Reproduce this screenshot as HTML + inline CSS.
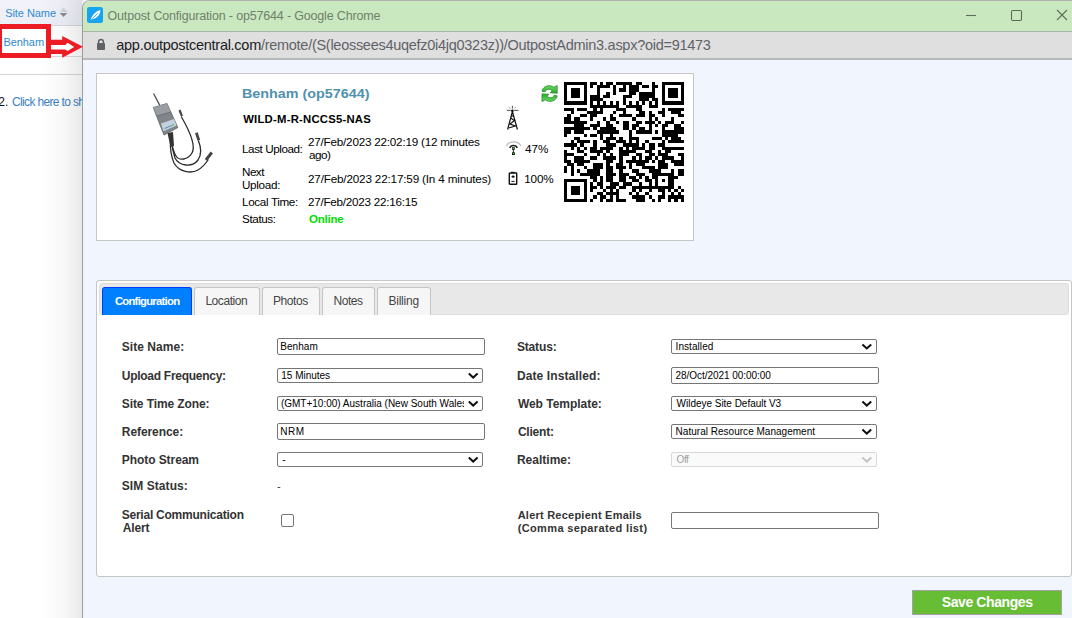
<!DOCTYPE html>
<html><head><meta charset="utf-8">
<style>
*{box-sizing:border-box}
html,body{margin:0;padding:0;width:1072px;height:618px;overflow:hidden;background:#fff;font-family:"Liberation Sans",sans-serif;position:relative}
.a{position:absolute;white-space:nowrap;line-height:1}
.abs{position:absolute}
.box{position:absolute;background:#fff;border:1px solid #767676;border-radius:2px}
.dis{border-color:#d8d8d8;background:#fafafa}
.chev{position:absolute}
</style></head><body>
<!-- LEFT PAGE -->
<div class="abs" style="left:0;top:0;width:90px;height:25px;background:linear-gradient(#f2f3fa,#eceef7)"></div>
<div class="abs" style="left:0;top:25px;width:90px;height:1px;background:#d5d8de"></div>
<div class="abs" style="left:0;top:56px;width:90px;height:1px;background:#dadada"></div>
<div class="abs" style="left:0;top:74px;width:90px;height:1px;background:#d4d4d4"></div>
<div class="a" style="left:5.20px;top:7.80px;font-size:11px;color:#2f8bd1;letter-spacing:-0.062px;">Site Name</div>
<svg class="abs" style="left:58px;top:6px" width="10" height="12"><polygon points="1.5,6 5.5,1.5 9.5,6" fill="#d6d6d6"/><polygon points="1.5,7 9.5,7 5.5,11" fill="#8e8e8e"/></svg>
<div class="a" style="left:3.50px;top:36.60px;font-size:11px;color:#2f8bd1;letter-spacing:-0.080px;">Benham</div>
<div class="a" style="left:-1.80px;top:95.90px;font-size:12px;color:#111;">2.</div>
<div class="a" style="left:12.00px;top:95.90px;font-size:12px;color:#3b7fc4;letter-spacing:-0.650px;">Click here to sh</div>
<div class="abs" style="left:40px;top:0;width:42px;height:618px;background:linear-gradient(to right,rgba(0,0,0,0),rgba(0,0,0,0.025) 50%,rgba(0,0,0,0.085))"></div>


<!-- CHROME WINDOW -->
<div class="abs" style="left:82px;top:0;width:992px;height:620px;border-left:1px solid #9c9c9c;border-top:1px solid #b0b0b0;border-top-left-radius:8px;overflow:hidden;background:#f1f5fe">
 <div class="abs" style="left:0;top:-1px;width:100%;height:32px;background:#c9e8bf;border-bottom:1px solid #a9b5a6"></div>
 <div class="abs" style="left:0;top:31px;width:100%;height:28px;background:#dfdfdf;border-bottom:2px solid #b8b8b8"></div>
</div>
<svg class="abs" style="left:87px;top:7px" width="17" height="17"><rect x="0" y="0" width="16" height="16" rx="2.5" fill="#17a3ef"/><path d="M3.6,13.6 C4.6,8.6 8,4.4 13.4,3 C13.2,7.8 10.4,11.2 5.6,12.2 Z" fill="#fff"/><path d="M3.2,14.2 L10.5,6.5" stroke="#17a3ef" stroke-width="0.9"/></svg>
<div class="a" style="left:107.50px;top:9.90px;font-size:12.5px;color:#72806e;letter-spacing:-0.170px;">Outpost Configuration - op57644 - Google Chrome</div>
<svg class="abs" style="left:960px;top:7px" width="112" height="16">
 <line x1="6" y1="8.5" x2="16" y2="8.5" stroke="#5e6b5a" stroke-width="1.1"/>
 <rect x="51.5" y="3.5" width="10" height="10" rx="1.2" fill="none" stroke="#5e6b5a" stroke-width="1.1"/>
 <path d="M97,3 L107,13 M107,3 L97,13" stroke="#5e6b5a" stroke-width="1.1"/>
</svg>
<svg class="abs" style="left:96px;top:38px" width="10" height="13"><path d="M2.6,5.5 V4 A2.4,2.4 0 0 1 7.4,4 V5.5" fill="none" stroke="#5f6368" stroke-width="1.5"/><rect x="1" y="5" width="8" height="7" rx="0.8" fill="#5f6368"/></svg>
<div class="a" style="left:116.30px;top:37.90px;font-size:14.5px;color:#5f6368;letter-spacing:-0.277px;"><span style="color:#202124">app.outpostcentral.com</span>/remote/(S(leossees4uqefz0i4jq0323z))/OutpostAdmin3.aspx?oid=91473</div>

<div class="abs" style="left:-3px;top:24px;width:54px;height:34px;border:5px solid #ec1c24"></div>
<svg class="abs" style="left:0;top:0" width="90" height="62">
<polygon points="50,39.8 62.2,39.8 62.2,36 83,46.8 62.2,57.7 62.2,54.1 50,54.1" fill="#ec1c24"/>
<polygon points="51,45 65.2,45 67.6,42.8 74.2,46.9 67.6,51 65.2,49.4 51,49.4" fill="#fff"/>
</svg>
<!-- CARD -->
<div class="abs" style="left:96px;top:73px;width:598px;height:168px;background:#fff;border:1px solid #c6c6c6"></div>
<svg class="abs" style="left:140px;top:88px" width="80" height="90" viewBox="140 88 80 90">
 <line x1="153.8" y1="94" x2="159.6" y2="105" stroke="#5a5050" stroke-width="1.4" stroke-linecap="round"/>
 <g fill="none" stroke="#2a2a2a" stroke-width="1.3" stroke-linecap="round">
  <path d="M171,140 C172,146 173,151 176,156 C179,161 188,160 192,153 C196,146 189,130 181.5,117"/>
  <path d="M171.5,140 C172,146 173,152 175,158 C179,166 192,168 198,160 C202,154 201,147 198.5,141"/>
  <path d="M170.5,140 C170,148 171,156 174,163 C179,172 191,174 198,170 C203,167 206,163 208,160"/>
 </g>
 <path d="M167.5,133 L173,132 L174,146 L170.5,147 Z" fill="#333"/>
 <polygon points="153.3,107.5 167,103.5 177.8,127.5 164,135" fill="#818589" stroke="#63676c" stroke-width="0.9" stroke-linejoin="round"/>
 <polygon points="153.3,107.5 167,103.5 170.5,111.5 157,115.5" fill="#9a9ea3"/>
 <path d="M157,116 L171,112" stroke="#6a6e73" stroke-width="0.8"/>
 <polygon points="161,123.5 174,119 176.6,125.6 163.4,131.2" fill="#c3d1de"/>
 <path d="M164.5,128.5 L170.5,126" stroke="#4a7fc0" stroke-width="0.9"/>
 <path d="M170.5,126 L174,124.5" stroke="#4aaa4a" stroke-width="0.9"/>
 <rect x="179.6" y="109.8" width="2.2" height="6.5" fill="#444" transform="rotate(-22 180.7 113)"/>
 <rect x="196.2" y="132.6" width="2.8" height="8" fill="#444" transform="rotate(-18 197.6 136.6)"/>
 <rect x="207.4" y="151.5" width="3" height="9.5" fill="#444" transform="rotate(38 208.9 156.2)"/>
</svg>

<div class="a" style="left:242.07px;top:87.70px;font-size:12.7px;color:#4f91ae;font-weight:bold;transform:scaleX(1.1297);transform-origin:0 0;">Benham (op57644)</div>
<div class="a" style="left:243.20px;top:113.80px;font-size:11.3px;color:#000;font-weight:bold;letter-spacing:0.235px;">WILD-M-R-NCCS5-NAS</div>
<div class="a" style="left:242.00px;top:143.40px;font-size:11.7px;color:#000;letter-spacing:-0.436px;">Last Upload:</div><div class="a" style="left:242.00px;top:166.00px;font-size:11.7px;color:#000;letter-spacing:-0.533px;">Next</div><div class="a" style="left:242.00px;top:178.70px;font-size:11.7px;color:#000;letter-spacing:-0.317px;">Upload:</div><div class="a" style="left:242.00px;top:195.80px;font-size:11.7px;color:#000;letter-spacing:-0.350px;">Local Time:</div><div class="a" style="left:242.00px;top:212.90px;font-size:11.7px;color:#000;letter-spacing:-0.383px;">Status:</div>
<div class="a" style="left:308.00px;top:136.00px;font-size:11.7px;color:#000;letter-spacing:-0.219px;">27/Feb/2023 22:02:19 (12 minutes</div><div class="a" style="left:309.00px;top:148.70px;font-size:11.7px;color:#000;letter-spacing:-0.500px;">ago)</div><div class="a" style="left:308.00px;top:172.70px;font-size:11.7px;color:#000;letter-spacing:-0.171px;">27/Feb/2023 22:17:59 (In 4 minutes)</div><div class="a" style="left:308.00px;top:196.00px;font-size:11.7px;color:#000;letter-spacing:-0.253px;">27/Feb/2023 22:16:15</div><div class="a" style="left:309.00px;top:214.00px;font-size:11.5px;color:#00dd00;font-weight:bold;letter-spacing:-0.240px;">Online</div>
<svg class="abs" style="left:540.6px;top:84.6px" width="17" height="17" viewBox="0 0 17 17">
 <defs><linearGradient id="rg" x1="0" y1="0" x2="0" y2="1"><stop offset="0" stop-color="#6fd86a"/><stop offset="1" stop-color="#2aa82a"/></linearGradient></defs>
 <g fill="url(#rg)" stroke="#178a17" stroke-width="0.75" stroke-linejoin="round">
 <path d="M1,6.2 C1.8,2.2 5.6,0.3 9.4,0.8 C10.9,1 12.1,1.6 12.9,2.3 L16.2,0.5 L16.2,8.2 L9.2,7.8 L11.2,5.8 C10.3,4.8 8.6,4.1 7,4.3 C5.4,4.6 4.5,5.5 4.1,6.8 Z"/>
 <path d="M1,6.2 C1.8,2.2 5.6,0.3 9.4,0.8 C10.9,1 12.1,1.6 12.9,2.3 L16.2,0.5 L16.2,8.2 L9.2,7.8 L11.2,5.8 C10.3,4.8 8.6,4.1 7,4.3 C5.4,4.6 4.5,5.5 4.1,6.8 Z" transform="rotate(180 8.6 8.55)"/>
 </g>
</svg>
<svg class="abs" style="left:506px;top:105px" width="14" height="26" viewBox="0 0 14 26">
 <g stroke="#222" stroke-width="0.8" fill="none">
  <line x1="0.8" y1="5.4" x2="4.6" y2="5.4"/><line x1="8.2" y1="5.4" x2="12.6" y2="5.4"/>
  <line x1="6.4" y1="0.8" x2="6.4" y2="3.6"/>
  <line x1="2.6" y1="2" x2="4.4" y2="3.6" stroke="#888"/><line x1="10.2" y1="2" x2="8.4" y2="3.6" stroke="#888"/>
 </g>
 <circle cx="6.4" cy="5.8" r="1.3" fill="#000"/>
 <g stroke="#111" stroke-width="1.2" fill="none">
  <path d="M6.4,6.5 L1.6,24.5 M6.4,6.5 L11.4,24.5"/>
  <path d="M4.6,13 L8.4,15.5 L4,19 L9.4,21 L2.6,23"/>
  <path d="M5,11 L8,11"/>
 </g>
</svg>
<svg class="abs" style="left:505px;top:140px" width="17" height="16" viewBox="0 0 17 16">
 <path d="M1.4,6 A7.6,6 0 0 1 15.8,6" fill="none" stroke="#b8b8b8" stroke-width="1.2"/>
 <path d="M4.8,8 A3.8,3.2 0 0 1 12.2,8" fill="none" stroke="#222" stroke-width="1.5"/>
 <rect x="7.1" y="7.2" width="2.6" height="2.6" fill="#111"/>
 <rect x="7" y="12.4" width="2.9" height="2.6" fill="#111"/>
 <line x1="8.4" y1="9" x2="8.4" y2="13" stroke="#111" stroke-width="0.9"/>
 <circle cx="8.4" cy="8.5" r="0.6" fill="#3f3"/><circle cx="8.45" cy="13.7" r="0.6" fill="#3f3"/>
</svg>
<svg class="abs" style="left:508px;top:171px" width="10" height="14" viewBox="0 0 10 14">
 <rect x="3" y="0.8" width="3.6" height="1.6" fill="#111"/>
 <rect x="1.3" y="2" width="7.4" height="11.3" rx="0.6" fill="#fff" stroke="#111" stroke-width="1.4"/>
 <path d="M3.6,5.6 H6.6 M5.1,4.2 V7" stroke="#111" stroke-width="1.1"/>
 <path d="M3.4,10.4 H6.6" stroke="#111" stroke-width="1"/>
</svg>

<div class="a" style="left:525.00px;top:143.30px;font-size:11.7px;color:#000;">47%</div><div class="a" style="left:524.30px;top:172.90px;font-size:11.7px;color:#000;letter-spacing:-0.200px;">100%</div>
<svg class="abs" style="left:564px;top:81px" width="122" height="122" viewBox="564 81 122 122" shape-rendering="crispEdges"><path fill="#000" d="M564.20,81.80h22.70v3.24h-22.70zM590.15,81.80h6.49v3.24h-6.49zM599.88,81.80h3.24v3.24h-3.24zM606.36,81.80h6.49v3.24h-6.49zM616.09,81.80h16.22v3.24h-16.22zM635.55,81.80h6.49v3.24h-6.49zM651.77,81.80h3.24v3.24h-3.24zM661.50,81.80h22.70v3.24h-22.70zM564.20,85.04h3.24v3.24h-3.24zM583.66,85.04h3.24v3.24h-3.24zM590.15,85.04h3.24v3.24h-3.24zM596.63,85.04h12.97v3.24h-12.97zM612.85,85.04h3.24v3.24h-3.24zM622.58,85.04h3.24v3.24h-3.24zM629.06,85.04h9.73v3.24h-9.73zM642.04,85.04h6.49v3.24h-6.49zM651.77,85.04h6.49v3.24h-6.49zM661.50,85.04h3.24v3.24h-3.24zM680.96,85.04h3.24v3.24h-3.24zM564.20,88.29h3.24v3.24h-3.24zM570.69,88.29h9.73v3.24h-9.73zM583.66,88.29h3.24v3.24h-3.24zM596.63,88.29h3.24v3.24h-3.24zM612.85,88.29h3.24v3.24h-3.24zM619.34,88.29h6.49v3.24h-6.49zM629.06,88.29h9.73v3.24h-9.73zM651.77,88.29h3.24v3.24h-3.24zM661.50,88.29h3.24v3.24h-3.24zM667.98,88.29h9.73v3.24h-9.73zM680.96,88.29h3.24v3.24h-3.24zM564.20,91.53h3.24v3.24h-3.24zM570.69,91.53h9.73v3.24h-9.73zM583.66,91.53h3.24v3.24h-3.24zM596.63,91.53h3.24v3.24h-3.24zM606.36,91.53h3.24v3.24h-3.24zM612.85,91.53h3.24v3.24h-3.24zM629.06,91.53h6.49v3.24h-6.49zM638.79,91.53h16.22v3.24h-16.22zM661.50,91.53h3.24v3.24h-3.24zM667.98,91.53h9.73v3.24h-9.73zM680.96,91.53h3.24v3.24h-3.24zM564.20,94.77h3.24v3.24h-3.24zM570.69,94.77h9.73v3.24h-9.73zM583.66,94.77h3.24v3.24h-3.24zM590.15,94.77h9.73v3.24h-9.73zM603.12,94.77h6.49v3.24h-6.49zM622.58,94.77h9.73v3.24h-9.73zM638.79,94.77h16.22v3.24h-16.22zM661.50,94.77h3.24v3.24h-3.24zM667.98,94.77h9.73v3.24h-9.73zM680.96,94.77h3.24v3.24h-3.24zM564.20,98.02h3.24v3.24h-3.24zM583.66,98.02h3.24v3.24h-3.24zM590.15,98.02h12.97v3.24h-12.97zM622.58,98.02h3.24v3.24h-3.24zM638.79,98.02h9.73v3.24h-9.73zM651.77,98.02h6.49v3.24h-6.49zM661.50,98.02h3.24v3.24h-3.24zM680.96,98.02h3.24v3.24h-3.24zM564.20,101.26h22.70v3.24h-22.70zM590.15,101.26h3.24v3.24h-3.24zM596.63,101.26h3.24v3.24h-3.24zM603.12,101.26h3.24v3.24h-3.24zM609.61,101.26h3.24v3.24h-3.24zM616.09,101.26h3.24v3.24h-3.24zM622.58,101.26h3.24v3.24h-3.24zM629.06,101.26h3.24v3.24h-3.24zM635.55,101.26h3.24v3.24h-3.24zM642.04,101.26h3.24v3.24h-3.24zM648.52,101.26h3.24v3.24h-3.24zM655.01,101.26h3.24v3.24h-3.24zM661.50,101.26h22.70v3.24h-22.70zM590.15,104.50h29.19v3.24h-29.19zM625.82,104.50h16.22v3.24h-16.22zM648.52,104.50h9.73v3.24h-9.73zM564.20,107.75h9.73v3.24h-9.73zM577.17,107.75h9.73v3.24h-9.73zM593.39,107.75h3.24v3.24h-3.24zM599.88,107.75h3.24v3.24h-3.24zM616.09,107.75h9.73v3.24h-9.73zM635.55,107.75h6.49v3.24h-6.49zM661.50,107.75h3.24v3.24h-3.24zM667.98,107.75h16.22v3.24h-16.22zM570.69,110.99h3.24v3.24h-3.24zM586.90,110.99h16.22v3.24h-16.22zM612.85,110.99h3.24v3.24h-3.24zM622.58,110.99h3.24v3.24h-3.24zM638.79,110.99h6.49v3.24h-6.49zM648.52,110.99h3.24v3.24h-3.24zM658.25,110.99h6.49v3.24h-6.49zM671.23,110.99h9.73v3.24h-9.73zM567.44,114.23h3.24v3.24h-3.24zM580.42,114.23h6.49v3.24h-6.49zM590.15,114.23h6.49v3.24h-6.49zM609.61,114.23h3.24v3.24h-3.24zM619.34,114.23h12.97v3.24h-12.97zM635.55,114.23h9.73v3.24h-9.73zM648.52,114.23h6.49v3.24h-6.49zM661.50,114.23h3.24v3.24h-3.24zM677.71,114.23h6.49v3.24h-6.49zM564.20,117.48h6.49v3.24h-6.49zM573.93,117.48h6.49v3.24h-6.49zM590.15,117.48h3.24v3.24h-3.24zM603.12,117.48h3.24v3.24h-3.24zM609.61,117.48h6.49v3.24h-6.49zM632.31,117.48h3.24v3.24h-3.24zM648.52,117.48h3.24v3.24h-3.24zM655.01,117.48h3.24v3.24h-3.24zM671.23,117.48h3.24v3.24h-3.24zM564.20,120.72h22.70v3.24h-22.70zM596.63,120.72h3.24v3.24h-3.24zM606.36,120.72h3.24v3.24h-3.24zM616.09,120.72h3.24v3.24h-3.24zM622.58,120.72h6.49v3.24h-6.49zM635.55,120.72h6.49v3.24h-6.49zM645.28,120.72h9.73v3.24h-9.73zM658.25,120.72h3.24v3.24h-3.24zM664.74,120.72h9.73v3.24h-9.73zM680.96,120.72h3.24v3.24h-3.24zM573.93,123.96h9.73v3.24h-9.73zM590.15,123.96h9.73v3.24h-9.73zM606.36,123.96h6.49v3.24h-6.49zM622.58,123.96h6.49v3.24h-6.49zM632.31,123.96h6.49v3.24h-6.49zM648.52,123.96h3.24v3.24h-3.24zM655.01,123.96h3.24v3.24h-3.24zM661.50,123.96h6.49v3.24h-6.49zM674.47,123.96h6.49v3.24h-6.49zM564.20,127.21h25.95v3.24h-25.95zM593.39,127.21h3.24v3.24h-3.24zM599.88,127.21h16.22v3.24h-16.22zM622.58,127.21h6.49v3.24h-6.49zM632.31,127.21h3.24v3.24h-3.24zM638.79,127.21h6.49v3.24h-6.49zM648.52,127.21h3.24v3.24h-3.24zM661.50,127.21h3.24v3.24h-3.24zM674.47,127.21h9.73v3.24h-9.73zM564.20,130.45h6.49v3.24h-6.49zM573.93,130.45h9.73v3.24h-9.73zM596.63,130.45h22.70v3.24h-22.70zM629.06,130.45h3.24v3.24h-3.24zM635.55,130.45h16.22v3.24h-16.22zM655.01,130.45h3.24v3.24h-3.24zM661.50,130.45h22.70v3.24h-22.70zM564.20,133.69h3.24v3.24h-3.24zM583.66,133.69h3.24v3.24h-3.24zM590.15,133.69h6.49v3.24h-6.49zM599.88,133.69h3.24v3.24h-3.24zM609.61,133.69h3.24v3.24h-3.24zM629.06,133.69h3.24v3.24h-3.24zM661.50,133.69h16.22v3.24h-16.22zM573.93,136.94h6.49v3.24h-6.49zM599.88,136.94h3.24v3.24h-3.24zM606.36,136.94h9.73v3.24h-9.73zM619.34,136.94h3.24v3.24h-3.24zM629.06,136.94h9.73v3.24h-9.73zM651.77,136.94h9.73v3.24h-9.73zM664.74,136.94h3.24v3.24h-3.24zM671.23,136.94h9.73v3.24h-9.73zM570.69,140.18h3.24v3.24h-3.24zM577.17,140.18h12.97v3.24h-12.97zM593.39,140.18h3.24v3.24h-3.24zM603.12,140.18h6.49v3.24h-6.49zM616.09,140.18h9.73v3.24h-9.73zM629.06,140.18h3.24v3.24h-3.24zM635.55,140.18h3.24v3.24h-3.24zM645.28,140.18h3.24v3.24h-3.24zM661.50,140.18h3.24v3.24h-3.24zM667.98,140.18h16.22v3.24h-16.22zM564.20,143.42h12.97v3.24h-12.97zM580.42,143.42h3.24v3.24h-3.24zM593.39,143.42h3.24v3.24h-3.24zM606.36,143.42h9.73v3.24h-9.73zM622.58,143.42h16.22v3.24h-16.22zM642.04,143.42h3.24v3.24h-3.24zM648.52,143.42h6.49v3.24h-6.49zM658.25,143.42h6.49v3.24h-6.49zM570.69,146.66h3.24v3.24h-3.24zM577.17,146.66h3.24v3.24h-3.24zM583.66,146.66h3.24v3.24h-3.24zM590.15,146.66h6.49v3.24h-6.49zM599.88,146.66h12.97v3.24h-12.97zM619.34,146.66h3.24v3.24h-3.24zM625.82,146.66h3.24v3.24h-3.24zM632.31,146.66h12.97v3.24h-12.97zM648.52,146.66h6.49v3.24h-6.49zM661.50,146.66h22.70v3.24h-22.70zM564.20,149.91h3.24v3.24h-3.24zM577.17,149.91h6.49v3.24h-6.49zM590.15,149.91h12.97v3.24h-12.97zM606.36,149.91h3.24v3.24h-3.24zM619.34,149.91h16.22v3.24h-16.22zM645.28,149.91h6.49v3.24h-6.49zM658.25,149.91h3.24v3.24h-3.24zM664.74,149.91h6.49v3.24h-6.49zM564.20,153.15h9.73v3.24h-9.73zM583.66,153.15h3.24v3.24h-3.24zM596.63,153.15h3.24v3.24h-3.24zM603.12,153.15h3.24v3.24h-3.24zM609.61,153.15h3.24v3.24h-3.24zM619.34,153.15h9.73v3.24h-9.73zM635.55,153.15h6.49v3.24h-6.49zM648.52,153.15h6.49v3.24h-6.49zM658.25,153.15h9.73v3.24h-9.73zM677.71,153.15h6.49v3.24h-6.49zM564.20,156.39h3.24v3.24h-3.24zM573.93,156.39h9.73v3.24h-9.73zM590.15,156.39h6.49v3.24h-6.49zM603.12,156.39h12.97v3.24h-12.97zM619.34,156.39h3.24v3.24h-3.24zM632.31,156.39h3.24v3.24h-3.24zM638.79,156.39h3.24v3.24h-3.24zM645.28,156.39h6.49v3.24h-6.49zM655.01,156.39h3.24v3.24h-3.24zM661.50,156.39h12.97v3.24h-12.97zM680.96,156.39h3.24v3.24h-3.24zM564.20,159.64h6.49v3.24h-6.49zM573.93,159.64h16.22v3.24h-16.22zM606.36,159.64h6.49v3.24h-6.49zM619.34,159.64h3.24v3.24h-3.24zM625.82,159.64h22.70v3.24h-22.70zM651.77,159.64h3.24v3.24h-3.24zM658.25,159.64h6.49v3.24h-6.49zM671.23,159.64h12.97v3.24h-12.97zM567.44,162.88h6.49v3.24h-6.49zM577.17,162.88h6.49v3.24h-6.49zM593.39,162.88h9.73v3.24h-9.73zM606.36,162.88h3.24v3.24h-3.24zM616.09,162.88h6.49v3.24h-6.49zM629.06,162.88h3.24v3.24h-3.24zM635.55,162.88h9.73v3.24h-9.73zM658.25,162.88h9.73v3.24h-9.73zM674.47,162.88h9.73v3.24h-9.73zM564.20,166.12h3.24v3.24h-3.24zM570.69,166.12h3.24v3.24h-3.24zM583.66,166.12h3.24v3.24h-3.24zM593.39,166.12h9.73v3.24h-9.73zM606.36,166.12h6.49v3.24h-6.49zM616.09,166.12h9.73v3.24h-9.73zM629.06,166.12h3.24v3.24h-3.24zM642.04,166.12h12.97v3.24h-12.97zM658.25,166.12h9.73v3.24h-9.73zM564.20,169.37h3.24v3.24h-3.24zM570.69,169.37h3.24v3.24h-3.24zM577.17,169.37h3.24v3.24h-3.24zM586.90,169.37h12.97v3.24h-12.97zM606.36,169.37h6.49v3.24h-6.49zM619.34,169.37h3.24v3.24h-3.24zM632.31,169.37h6.49v3.24h-6.49zM648.52,169.37h12.97v3.24h-12.97zM671.23,169.37h3.24v3.24h-3.24zM677.71,169.37h6.49v3.24h-6.49zM570.69,172.61h3.24v3.24h-3.24zM580.42,172.61h19.46v3.24h-19.46zM606.36,172.61h9.73v3.24h-9.73zM619.34,172.61h9.73v3.24h-9.73zM635.55,172.61h9.73v3.24h-9.73zM651.77,172.61h22.70v3.24h-22.70zM677.71,172.61h6.49v3.24h-6.49zM590.15,175.85h6.49v3.24h-6.49zM599.88,175.85h3.24v3.24h-3.24zM606.36,175.85h6.49v3.24h-6.49zM619.34,175.85h6.49v3.24h-6.49zM629.06,175.85h6.49v3.24h-6.49zM638.79,175.85h3.24v3.24h-3.24zM645.28,175.85h3.24v3.24h-3.24zM651.77,175.85h6.49v3.24h-6.49zM667.98,175.85h9.73v3.24h-9.73zM564.20,179.10h22.70v3.24h-22.70zM593.39,179.10h3.24v3.24h-3.24zM599.88,179.10h3.24v3.24h-3.24zM606.36,179.10h6.49v3.24h-6.49zM619.34,179.10h6.49v3.24h-6.49zM632.31,179.10h6.49v3.24h-6.49zM645.28,179.10h6.49v3.24h-6.49zM655.01,179.10h3.24v3.24h-3.24zM661.50,179.10h3.24v3.24h-3.24zM667.98,179.10h6.49v3.24h-6.49zM564.20,182.34h3.24v3.24h-3.24zM583.66,182.34h3.24v3.24h-3.24zM590.15,182.34h3.24v3.24h-3.24zM596.63,182.34h6.49v3.24h-6.49zM609.61,182.34h9.73v3.24h-9.73zM622.58,182.34h9.73v3.24h-9.73zM638.79,182.34h3.24v3.24h-3.24zM648.52,182.34h3.24v3.24h-3.24zM655.01,182.34h3.24v3.24h-3.24zM667.98,182.34h6.49v3.24h-6.49zM564.20,185.58h3.24v3.24h-3.24zM570.69,185.58h9.73v3.24h-9.73zM583.66,185.58h3.24v3.24h-3.24zM590.15,185.58h6.49v3.24h-6.49zM599.88,185.58h3.24v3.24h-3.24zM606.36,185.58h9.73v3.24h-9.73zM619.34,185.58h6.49v3.24h-6.49zM632.31,185.58h42.16v3.24h-42.16zM677.71,185.58h3.24v3.24h-3.24zM564.20,188.83h3.24v3.24h-3.24zM570.69,188.83h9.73v3.24h-9.73zM583.66,188.83h3.24v3.24h-3.24zM590.15,188.83h3.24v3.24h-3.24zM603.12,188.83h3.24v3.24h-3.24zM609.61,188.83h3.24v3.24h-3.24zM616.09,188.83h3.24v3.24h-3.24zM632.31,188.83h3.24v3.24h-3.24zM638.79,188.83h3.24v3.24h-3.24zM648.52,188.83h3.24v3.24h-3.24zM658.25,188.83h6.49v3.24h-6.49zM667.98,188.83h3.24v3.24h-3.24zM674.47,188.83h3.24v3.24h-3.24zM680.96,188.83h3.24v3.24h-3.24zM564.20,192.07h3.24v3.24h-3.24zM570.69,192.07h9.73v3.24h-9.73zM583.66,192.07h3.24v3.24h-3.24zM596.63,192.07h6.49v3.24h-6.49zM606.36,192.07h12.97v3.24h-12.97zM629.06,192.07h3.24v3.24h-3.24zM635.55,192.07h3.24v3.24h-3.24zM645.28,192.07h3.24v3.24h-3.24zM661.50,192.07h3.24v3.24h-3.24zM671.23,192.07h3.24v3.24h-3.24zM677.71,192.07h3.24v3.24h-3.24zM564.20,195.31h3.24v3.24h-3.24zM583.66,195.31h3.24v3.24h-3.24zM593.39,195.31h3.24v3.24h-3.24zM599.88,195.31h6.49v3.24h-6.49zM609.61,195.31h3.24v3.24h-3.24zM616.09,195.31h3.24v3.24h-3.24zM632.31,195.31h12.97v3.24h-12.97zM648.52,195.31h3.24v3.24h-3.24zM658.25,195.31h6.49v3.24h-6.49zM667.98,195.31h16.22v3.24h-16.22zM564.20,198.56h22.70v3.24h-22.70zM590.15,198.56h3.24v3.24h-3.24zM599.88,198.56h3.24v3.24h-3.24zM606.36,198.56h6.49v3.24h-6.49zM616.09,198.56h9.73v3.24h-9.73zM635.55,198.56h9.73v3.24h-9.73zM651.77,198.56h3.24v3.24h-3.24zM658.25,198.56h3.24v3.24h-3.24zM667.98,198.56h3.24v3.24h-3.24zM674.47,198.56h3.24v3.24h-3.24zM680.96,198.56h3.24v3.24h-3.24z"/></svg>

<!-- WIDGET -->
<div class="abs" style="left:96px;top:280px;width:976px;height:297px;background:#fff;border:1px solid #c5c5c5;border-radius:3px"></div>
<div class="abs" style="left:99px;top:283px;width:970px;height:32px;background:#e8e8e8;border:1px solid #dddddd;border-radius:3px"></div>
<div class="abs" style="left:102px;top:287px;width:90px;height:28px;background:#007fff;border:1px solid #003eff;border-bottom:none;border-radius:3px 3px 0 0"></div>
<div class="abs" style="left:194px;top:287px;width:66px;height:28px;background:#f6f6f6;border:1px solid #c5c5c5;border-bottom:none;border-radius:3px 3px 0 0"></div>
<div class="abs" style="left:262px;top:287px;width:58px;height:28px;background:#f6f6f6;border:1px solid #c5c5c5;border-bottom:none;border-radius:3px 3px 0 0"></div>
<div class="abs" style="left:322px;top:287px;width:53px;height:28px;background:#f6f6f6;border:1px solid #c5c5c5;border-bottom:none;border-radius:3px 3px 0 0"></div>
<div class="abs" style="left:377px;top:287px;width:54px;height:28px;background:#f6f6f6;border:1px solid #c5c5c5;border-bottom:none;border-radius:3px 3px 0 0"></div>
<div class="a" style="left:114.90px;top:295.90px;font-size:11.3px;color:#fff;font-weight:bold;letter-spacing:-0.742px;">Configuration</div><div class="a" style="left:205.40px;top:295.00px;font-size:12px;color:#454545;letter-spacing:-0.443px;">Location</div><div class="a" style="left:273.00px;top:295.00px;font-size:12px;color:#454545;letter-spacing:-0.440px;">Photos</div><div class="a" style="left:333.60px;top:295.00px;font-size:12px;color:#454545;letter-spacing:-0.500px;">Notes</div><div class="a" style="left:388.40px;top:295.00px;font-size:12px;color:#454545;letter-spacing:-0.217px;">Billing</div>
<div class="a" style="left:121.80px;top:341.40px;font-size:12px;color:#333;font-weight:bold;letter-spacing:0.044px;">Site Name:</div><div class="a" style="left:121.80px;top:370.00px;font-size:12px;color:#333;font-weight:bold;letter-spacing:-0.275px;">Upload Frequency:</div><div class="a" style="left:121.80px;top:398.30px;font-size:12px;color:#333;font-weight:bold;letter-spacing:-0.100px;">Site Time Zone:</div><div class="a" style="left:121.80px;top:426.30px;font-size:12px;color:#333;font-weight:bold;letter-spacing:-0.078px;">Reference:</div><div class="a" style="left:121.80px;top:454.40px;font-size:12px;color:#333;font-weight:bold;letter-spacing:-0.073px;">Photo Stream</div><div class="a" style="left:121.70px;top:479.80px;font-size:12px;color:#333;font-weight:bold;letter-spacing:0.080px;">SIM Status:</div><div class="a" style="left:121.70px;top:509.10px;font-size:12px;color:#333;font-weight:bold;letter-spacing:-0.232px;">Serial Communication</div><div class="a" style="left:122.70px;top:521.50px;font-size:12px;color:#333;font-weight:bold;letter-spacing:-0.150px;">Alert</div>
<div class="a" style="left:516.90px;top:341.40px;font-size:12px;color:#333;font-weight:bold;letter-spacing:-0.150px;">Status:</div><div class="a" style="left:516.90px;top:370.20px;font-size:12px;color:#333;font-weight:bold;letter-spacing:0.107px;">Date Installed:</div><div class="a" style="left:517.90px;top:398.30px;font-size:12px;color:#333;font-weight:bold;letter-spacing:-0.025px;">Web Template:</div><div class="a" style="left:517.90px;top:426.30px;font-size:12px;color:#333;font-weight:bold;letter-spacing:-0.217px;">Client:</div><div class="a" style="left:516.90px;top:454.40px;font-size:12px;color:#333;font-weight:bold;letter-spacing:0.013px;">Realtime:</div><div class="a" style="left:517.70px;top:509.70px;font-size:11px;color:#333;font-weight:bold;letter-spacing:0.229px;">Alert Recepient Emails</div><div class="a" style="left:517.70px;top:522.60px;font-size:11px;color:#333;font-weight:bold;letter-spacing:0.367px;">(Comma separated list)</div>
<!-- inputs -->
<div class="box" style="left:277px;top:338px;width:208px;height:17px"></div>
<div class="box" style="left:277px;top:368px;width:206px;height:15px"></div>
<div class="box" style="left:277px;top:396px;width:206px;height:15px;overflow:hidden"></div>
<div class="box" style="left:277px;top:423px;width:208px;height:17px"></div>
<div class="box" style="left:277px;top:452px;width:206px;height:15px"></div>
<div class="abs" style="left:281px;top:396px;width:183px;height:14px;overflow:hidden"><div class="a" style="left:-0.10px;top:3.30px;font-size:10px;color:#000;">(GMT+10:00) Australia (New South Wales)</div></div>
<div class="a" style="left:280.20px;top:342.40px;font-size:10px;color:#000;letter-spacing:0.080px;">Benham</div><div class="a" style="left:281.30px;top:371.10px;font-size:10px;color:#000;letter-spacing:-0.022px;">15 Minutes</div><div class="a" style="left:280.20px;top:427.00px;font-size:10px;color:#000;letter-spacing:0.500px;">NRM</div><div class="a" style="left:282.30px;top:455.00px;font-size:10px;color:#000;">-</div>
<div class="box" style="left:671px;top:339px;width:206px;height:15px"></div>
<div class="box" style="left:671px;top:367px;width:208px;height:17px"></div>
<div class="box" style="left:671px;top:396px;width:206px;height:15px"></div>
<div class="box" style="left:671px;top:424px;width:206px;height:15px"></div>
<div class="box dis" style="left:671px;top:452px;width:206px;height:15px"></div>
<div class="a" style="left:675.60px;top:341.90px;font-size:10px;color:#000;letter-spacing:0.062px;">Installed</div><div class="a" style="left:675.50px;top:370.90px;font-size:10px;color:#000;letter-spacing:-0.042px;">28/Oct/2021 00:00:00</div><div class="a" style="left:676.60px;top:399.00px;font-size:10px;color:#000;letter-spacing:-0.023px;">Wildeye Site Default V3</div><div class="a" style="left:675.60px;top:427.00px;font-size:10px;color:#000;letter-spacing:0.019px;">Natural Resource Management</div><div class="a" style="left:676.60px;top:454.70px;font-size:10px;color:#a0a0a0;letter-spacing:-0.450px;">Off</div>
<svg class="abs" style="left:0;top:0;pointer-events:none" width="1072" height="618">
<g fill="none" stroke="#111" stroke-width="2" stroke-linejoin="miter">
<path d="M468.8,373.6 L473.2,377.6 L477.6,373.6"/>
<path d="M468.8,401.6 L473.2,405.6 L477.6,401.6"/>
<path d="M468.8,457.6 L473.2,461.6 L477.6,457.6"/>
<path d="M862.4,344.4 L866.8,348.4 L871.2,344.4"/>
<path d="M862.4,401.6 L866.8,405.6 L871.2,401.6"/>
<path d="M862.4,429.6 L866.8,433.6 L871.2,429.6"/>
</g>
<path d="M862.4,457.6 L866.8,461.6 L871.2,457.6" fill="none" stroke="#c4c4c4" stroke-width="2"/>
</svg>

<div class="a" style="left:276.90px;top:481.00px;font-size:11px;color:#333;">-</div>
<div class="abs" style="left:281px;top:514px;width:13px;height:13px;border:1px solid #767676;border-radius:2px;background:#fff"></div>
<div class="box" style="left:671px;top:512px;width:208px;height:17px"></div>
<!-- save -->
<div class="abs" style="left:912px;top:590px;width:150px;height:25px;background:#67bd33;border:1px solid #a3a3a3"></div>
<div class="a" style="left:941.70px;top:595.00px;font-size:14px;color:#fff;font-weight:bold;letter-spacing:-0.400px;">Save Changes</div>
</body></html>
